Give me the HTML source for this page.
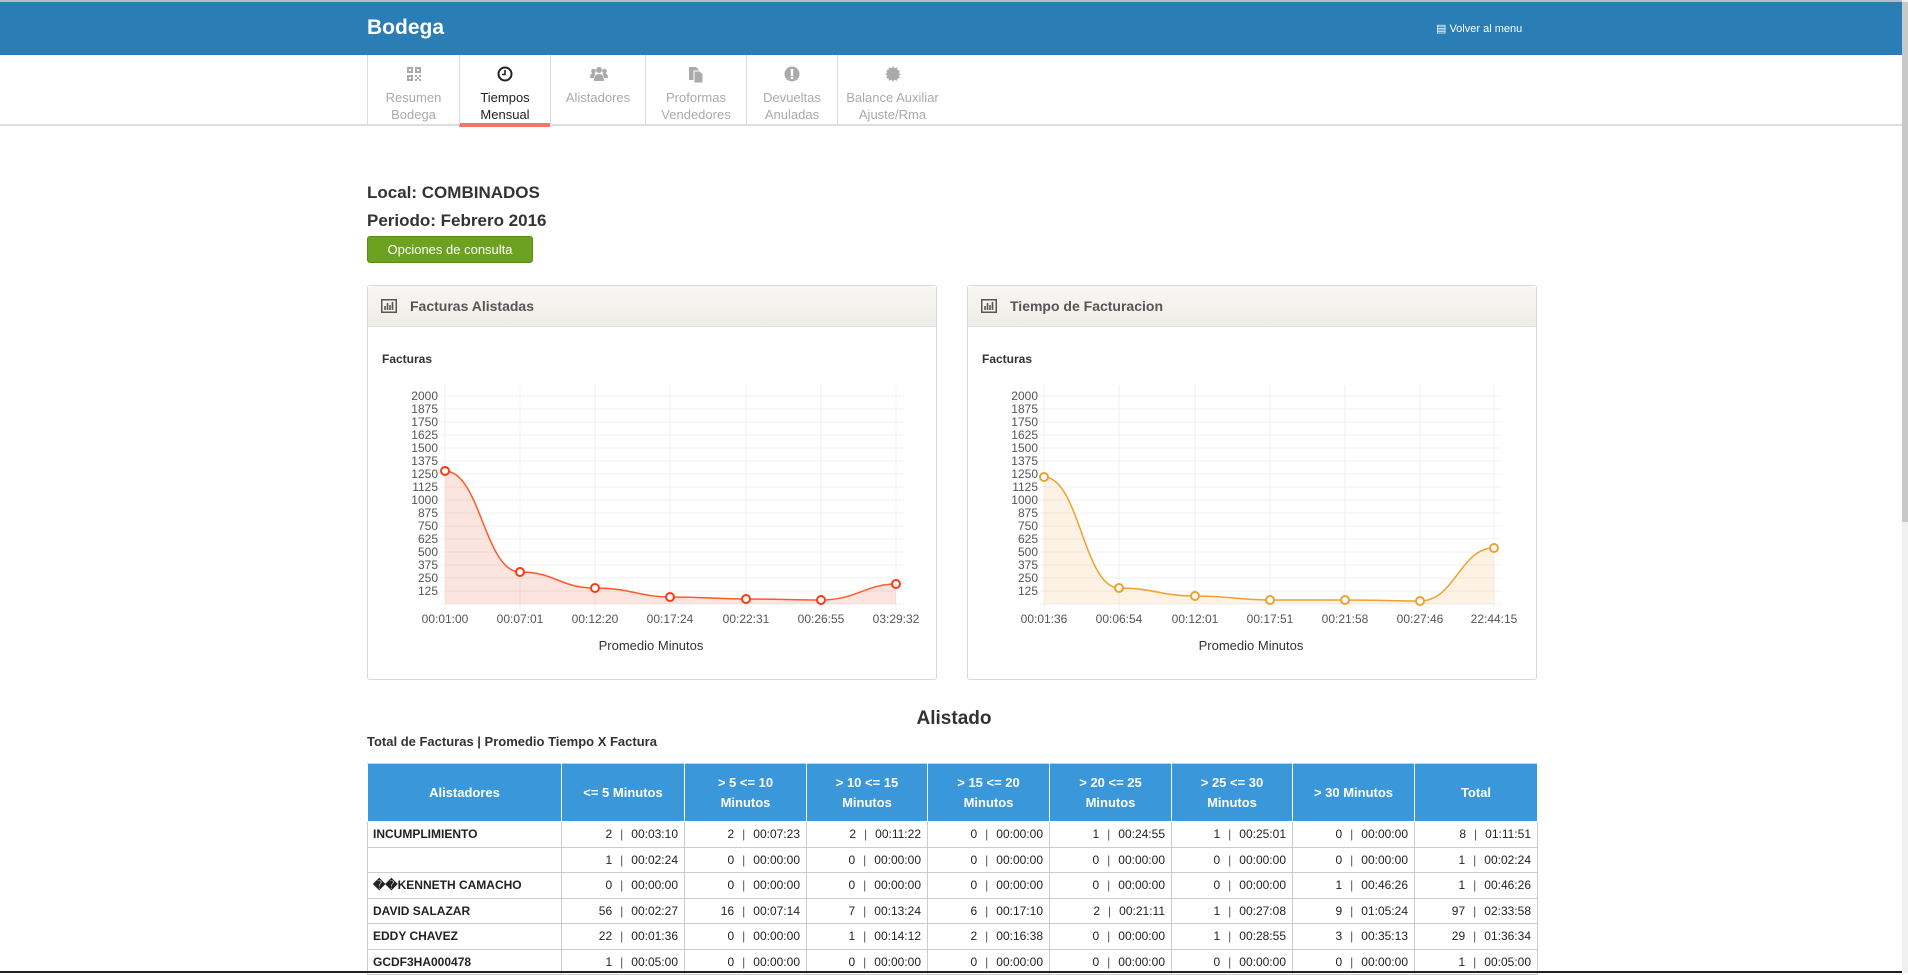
<!DOCTYPE html>
<html><head><meta charset="utf-8">
<style>
*{box-sizing:border-box;margin:0;padding:0}
body{width:1908px;height:973px;overflow:hidden;background:#fff;font-family:"Liberation Sans",sans-serif;color:#333;position:relative}
.hdr{position:absolute;left:0;top:0;width:1902px;height:55px;background:#2a7db5;border-top:2px solid #bbb}
.hdr .t{position:absolute;left:367px;top:14px;color:#fff;font-size:21px;font-weight:bold}
.hdr .v{position:absolute;left:1436px;top:20px;color:#fff;font-size:11px}
.nav{position:absolute;left:0;top:55px;width:1902px;height:71px;border-bottom:2px solid #ddd}
.tab{position:absolute;top:0;height:69px;border-left:1px solid #ddd;text-align:center;font-size:13px;color:#aaa;line-height:17px;padding-top:34px}
.tab svg{position:absolute;top:11px;left:50%;margin-left:-8px}
.tab.a{color:#222;border-bottom:4px solid #f0766a;height:72px}
.info{position:absolute;left:367px;font-size:17px;font-weight:bold;color:#333}
.btn{position:absolute;left:367px;top:236px;width:166px;height:27px;background:#6ca21f;border:1px solid #5a8c14;border-radius:3px;color:#fff;font-size:13px;text-align:center;line-height:25px}
.panel{position:absolute;top:285px;width:570px;height:395px;border:1px solid #d8d8d8;border-radius:3px}
.panel .ph{height:41px;background:linear-gradient(#f8f7f4,#efede8);border-bottom:1px solid #ddd;font-size:14px;font-weight:bold;color:#555;line-height:41px;padding-left:42px;position:relative}
.panel .ph svg{position:absolute;left:13px;top:13px}
.ttl{position:absolute;left:0;width:1908px;text-align:center;top:708px;font-size:19px;font-weight:bold;color:#333}
.sub{position:absolute;left:367px;top:734px;font-size:13px;font-weight:bold;color:#333}
table{position:absolute;left:367px;top:763px;border-collapse:collapse;table-layout:fixed;width:1170px;font-size:12px}
th{background:#3a97d9;color:#fff;height:58px;border:1px solid #fff;border-top:1px solid #ccc;font-weight:bold;line-height:20px;font-size:13px}
td{border:1px solid #ccc;height:25.5px;text-align:right;padding-right:6px;color:#222}
td:first-child{text-align:left;padding-left:5px;font-weight:bold}
td b{font-weight:normal;color:#555;padding:0 8px}
.sb{position:absolute;right:0;top:0;width:6px;height:973px;background:#f0f0f0}
.sb div{width:6px;height:520px;background:#c8c8c8;margin-top:2px}
</style></head><body>
<div class="hdr"><div class="t">Bodega</div><div class="v">&#9636; Volver al menu</div></div>
<div class="nav">
<div class="tab" style="left:367px;width:92px"><svg width="16" height="16" viewBox="0 0 16 16" fill="#aaa"><path d="M1 1h6v6H1zM3 3v2h2V3zM9 1h6v6H9zM11 3v2h2V3zM1 9h6v6H1zM3 11v2h2v-2zM9 9h2v2H9zM13 9h2v2h-2zM11 11h2v2h-2zM9 13h2v2H9zM13 13h2v2h-2z"/></svg>Resumen<br>Bodega</div>
<div class="tab a" style="left:459px;width:91px"><svg width="16" height="16" viewBox="0 0 16 16"><circle cx="8" cy="8" r="6.5" fill="none" stroke="#222" stroke-width="2"/><path d="M8 4v4.5H5" fill="none" stroke="#222" stroke-width="1.6"/></svg>Tiempos<br>Mensual</div>
<div class="tab" style="left:550px;width:95px"><svg width="18" height="16" viewBox="0 0 18 16" fill="#aaa"><circle cx="9" cy="4" r="3"/><circle cx="3.5" cy="5" r="2.3"/><circle cx="14.5" cy="5" r="2.3"/><path d="M4 15c0-5 2-7 5-7s5 2 5 7zM0 12c0-3 1-5 3.5-5 1 0 1.5.3 2 1-1 1.5-1.5 3-1.5 4zM18 12c0-3-1-5-3.5-5-1 0-1.5.3-2 1 1 1.5 1.5 3 1.5 4z"/></svg>Alistadores</div>
<div class="tab" style="left:645px;width:101px"><svg width="16" height="18" viewBox="0 0 16 18" fill="#aaa"><path d="M1 1h7l3 3v10H1z"/><path d="M6 5h6l3 3v9H6z" fill="#aaa" stroke="#fff" stroke-width="1"/></svg>Proformas<br>Vendedores</div>
<div class="tab" style="left:746px;width:91px"><svg width="16" height="16" viewBox="0 0 16 16"><circle cx="8" cy="8" r="7.5" fill="#aaa"/><rect x="6.8" y="3" width="2.4" height="7" fill="#fff"/><rect x="6.8" y="11" width="2.4" height="2.2" fill="#fff"/></svg>Devueltas<br>Anuladas</div>
<div class="tab" style="left:837px;width:110px"><svg width="16" height="16" viewBox="0 0 16 16"><circle cx="8" cy="8" r="6" fill="#aaa"/><path d="M8 0l1.5 2.5L12 1l.5 3L15 4.5 13.5 7 16 8l-2.5 1.5L15 12l-2.5.5L12 15l-2.5-1.5L8 16l-1.5-2.5L4 15l-.5-2.5L1 12l1.5-2.5L0 8l2.5-1L1 4.5 3.5 4 4 1l2.5 1.5z" fill="#aaa"/></svg>Balance Auxiliar<br>Ajuste/Rma</div>
</div>
<div class="info" style="top:183px">Local: COMBINADOS</div>
<div class="info" style="top:211px">Periodo: Febrero 2016</div>
<div class="btn">Opciones de consulta</div>

<div class="panel" style="left:367px"><div class="ph"><svg width="16" height="14" viewBox="0 0 16 14"><rect x=".75" y=".75" width="14.5" height="12.5" fill="none" stroke="#555" stroke-width="1.5"/><path d="M4 11V7M6.5 11V4M9 11V6M11.5 11V3" stroke="#555" stroke-width="1.6"/></svg>Facturas Alistadas</div></div>
<div class="panel" style="left:967px"><div class="ph"><svg width="16" height="14" viewBox="0 0 16 14"><rect x=".75" y=".75" width="14.5" height="12.5" fill="none" stroke="#555" stroke-width="1.5"/><path d="M4 11V7M6.5 11V4M9 11V6M11.5 11V3" stroke="#555" stroke-width="1.6"/></svg>Tiempo de Facturacion</div></div>

<svg style="position:absolute;left:0;top:0" width="1908" height="700" font-family="Liberation Sans,sans-serif">
<g id="c1">
<text x="382" y="363" font-size="12" font-weight="bold" fill="#333">Facturas</text>
<g stroke="#f0f0f0" stroke-width="1">
<path d="M441 604H904M441 591H904M441 578H904M441 565H904M441 552H904M441 539H904M441 526H904M441 513H904M441 500H904M441 487H904M441 474H904M441 461H904M441 448H904M441 435H904M441 422H904M441 409H904M441 396H904"/>
<path d="M445 385V610M520 385V610M595 385V610M670 385V610M746 385V610M821 385V610M896 385V610"/>
</g>
<g font-size="12" fill="#555" text-anchor="end">
<text x="438" y="400">2000</text><text x="438" y="413">1875</text><text x="438" y="426">1750</text><text x="438" y="439">1625</text><text x="438" y="452">1500</text><text x="438" y="465">1375</text><text x="438" y="478">1250</text><text x="438" y="491">1125</text><text x="438" y="504">1000</text><text x="438" y="517">875</text><text x="438" y="530">750</text><text x="438" y="543">625</text><text x="438" y="556">500</text><text x="438" y="569">375</text><text x="438" y="582">250</text><text x="438" y="595">125</text>
</g>
<g font-size="12" fill="#555" text-anchor="middle">
<text x="445" y="623">00:01:00</text><text x="520" y="623">00:07:01</text><text x="595" y="623">00:12:20</text><text x="670" y="623">00:17:24</text><text x="746" y="623">00:22:31</text><text x="821" y="623">00:26:55</text><text x="896" y="623">03:29:32</text>
<text x="651" y="650" font-size="13" fill="#333">Promedio Minutos</text>
</g>
<path d="M445,471 C480,471 485,572 520,572 C555,572 560,588 595,588 C630,588 640,597 670,597 C705,597 716,599 746,599 C780,599 791,600 821,600 C856,600 866,584 896,584 L896,604 L445,604Z" fill="rgba(240,110,70,0.18)"/>
<path d="M445,471 C480,471 485,572 520,572 C555,572 560,588 595,588 C630,588 640,597 670,597 C705,597 716,599 746,599 C780,599 791,600 821,600 C856,600 866,584 896,584" fill="none" stroke="#ff5a2a" stroke-width="1.5"/>
<g fill="#fff" stroke="#ff3a10" stroke-width="2"><circle cx="445" cy="471" r="4"/><circle cx="520" cy="572" r="4"/><circle cx="595" cy="588" r="4"/><circle cx="670" cy="597" r="4"/><circle cx="746" cy="599" r="4"/><circle cx="821" cy="600" r="4"/><circle cx="896" cy="584" r="4"/></g>
</g>
<g>
<text x="982" y="363" font-size="12" font-weight="bold" fill="#333">Facturas</text>
<g stroke="#f0f0f0" stroke-width="1">
<path d="M1040 604H1502M1040 591H1502M1040 578H1502M1040 565H1502M1040 552H1502M1040 539H1502M1040 526H1502M1040 513H1502M1040 500H1502M1040 487H1502M1040 474H1502M1040 461H1502M1040 448H1502M1040 435H1502M1040 422H1502M1040 409H1502M1040 396H1502"/>
<path d="M1044 385V610M1119 385V610M1195 385V610M1270 385V610M1345 385V610M1420 385V610M1494 385V610"/>
</g>
<g font-size="12" fill="#555" text-anchor="end">
<text x="1038" y="400">2000</text><text x="1038" y="413">1875</text><text x="1038" y="426">1750</text><text x="1038" y="439">1625</text><text x="1038" y="452">1500</text><text x="1038" y="465">1375</text><text x="1038" y="478">1250</text><text x="1038" y="491">1125</text><text x="1038" y="504">1000</text><text x="1038" y="517">875</text><text x="1038" y="530">750</text><text x="1038" y="543">625</text><text x="1038" y="556">500</text><text x="1038" y="569">375</text><text x="1038" y="582">250</text><text x="1038" y="595">125</text>
</g>
<g font-size="12" fill="#555" text-anchor="middle">
<text x="1044" y="623">00:01:36</text><text x="1119" y="623">00:06:54</text><text x="1195" y="623">00:12:01</text><text x="1270" y="623">00:17:51</text><text x="1345" y="623">00:21:58</text><text x="1420" y="623">00:27:46</text><text x="1494" y="623">22:44:15</text>
<text x="1251" y="650" font-size="13" fill="#333">Promedio Minutos</text>
</g>
<path d="M1044,477 C1079,477 1084,588 1119,588 C1154,588 1160,596 1195,596 C1230,596 1240,600 1270,600 C1305,600 1315,600 1345,600 C1380,600 1390,601 1420,601 C1455,601 1460,548 1494,548 L1494,604 L1044,604Z" fill="rgba(245,170,80,0.15)"/>
<path d="M1044,477 C1079,477 1084,588 1119,588 C1154,588 1160,596 1195,596 C1230,596 1240,600 1270,600 C1305,600 1315,600 1345,600 C1380,600 1390,601 1420,601 C1455,601 1460,548 1494,548" fill="none" stroke="#f0a030" stroke-width="1.5"/>
<g fill="#fff" stroke="#eea030" stroke-width="2"><circle cx="1044" cy="477" r="4"/><circle cx="1119" cy="588" r="4"/><circle cx="1195" cy="596" r="4"/><circle cx="1270" cy="600" r="4"/><circle cx="1345" cy="600" r="4"/><circle cx="1420" cy="601" r="4"/><circle cx="1494" cy="548" r="4"/></g>
</g>
</svg>

<div class="ttl">Alistado</div>
<div class="sub">Total de Facturas | Promedio Tiempo X Factura</div>
<table>
<colgroup><col style="width:194px"><col style="width:123px"><col style="width:122px"><col style="width:121px"><col style="width:122px"><col style="width:122px"><col style="width:121px"><col style="width:122px"><col style="width:123px"></colgroup>
<tr><th>Alistadores</th><th>&lt;= 5 Minutos</th><th>&gt; 5 &lt;= 10<br>Minutos</th><th>&gt; 10 &lt;= 15<br>Minutos</th><th>&gt; 15 &lt;= 20<br>Minutos</th><th>&gt; 20 &lt;= 25<br>Minutos</th><th>&gt; 25 &lt;= 30<br>Minutos</th><th>&gt; 30 Minutos</th><th>Total</th></tr>
<tr><td>INCUMPLIMIENTO</td><td>2<b>|</b>00:03:10</td><td>2<b>|</b>00:07:23</td><td>2<b>|</b>00:11:22</td><td>0<b>|</b>00:00:00</td><td>1<b>|</b>00:24:55</td><td>1<b>|</b>00:25:01</td><td>0<b>|</b>00:00:00</td><td>8<b>|</b>01:11:51</td></tr>
<tr><td></td><td>1<b>|</b>00:02:24</td><td>0<b>|</b>00:00:00</td><td>0<b>|</b>00:00:00</td><td>0<b>|</b>00:00:00</td><td>0<b>|</b>00:00:00</td><td>0<b>|</b>00:00:00</td><td>0<b>|</b>00:00:00</td><td>1<b>|</b>00:02:24</td></tr>
<tr><td>��KENNETH CAMACHO</td><td>0<b>|</b>00:00:00</td><td>0<b>|</b>00:00:00</td><td>0<b>|</b>00:00:00</td><td>0<b>|</b>00:00:00</td><td>0<b>|</b>00:00:00</td><td>0<b>|</b>00:00:00</td><td>1<b>|</b>00:46:26</td><td>1<b>|</b>00:46:26</td></tr>
<tr><td>DAVID SALAZAR</td><td>56<b>|</b>00:02:27</td><td>16<b>|</b>00:07:14</td><td>7<b>|</b>00:13:24</td><td>6<b>|</b>00:17:10</td><td>2<b>|</b>00:21:11</td><td>1<b>|</b>00:27:08</td><td>9<b>|</b>01:05:24</td><td>97<b>|</b>02:33:58</td></tr>
<tr><td>EDDY CHAVEZ</td><td>22<b>|</b>00:01:36</td><td>0<b>|</b>00:00:00</td><td>1<b>|</b>00:14:12</td><td>2<b>|</b>00:16:38</td><td>0<b>|</b>00:00:00</td><td>1<b>|</b>00:28:55</td><td>3<b>|</b>00:35:13</td><td>29<b>|</b>01:36:34</td></tr>
<tr><td>GCDF3HA000478</td><td>1<b>|</b>00:05:00</td><td>0<b>|</b>00:00:00</td><td>0<b>|</b>00:00:00</td><td>0<b>|</b>00:00:00</td><td>0<b>|</b>00:00:00</td><td>0<b>|</b>00:00:00</td><td>0<b>|</b>00:00:00</td><td>1<b>|</b>00:05:00</td></tr>
</table>
<div style="position:absolute;left:0;top:971px;width:1902px;height:2px;background:#222"></div>
<div class="sb"><div></div></div>
</body></html>
